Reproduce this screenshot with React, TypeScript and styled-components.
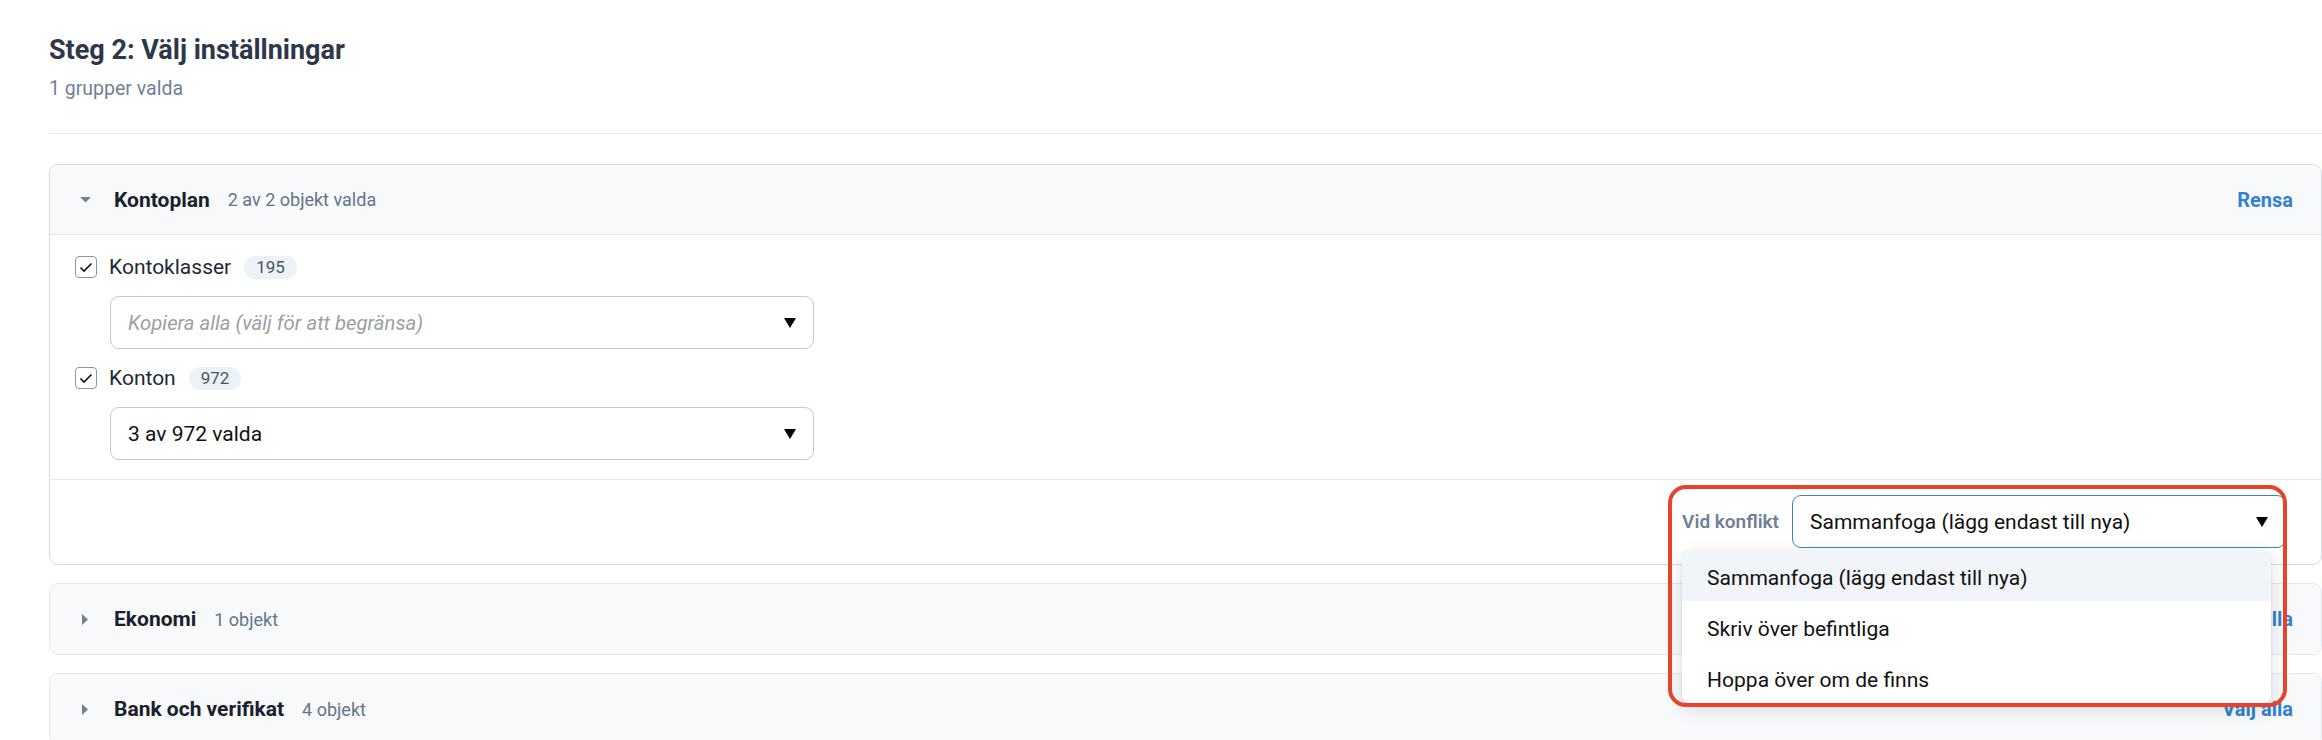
import React from "react";
import styled, { createGlobalStyle } from "styled-components";

const GlobalStyle = createGlobalStyle`
  html, body { margin: 0; padding: 0; background: #ffffff; }
  body {
    font-family: Roboto, "Liberation Sans", Arial, sans-serif;
    -webkit-font-smoothing: antialiased;
  }
  *, *::before, *::after { box-sizing: border-box; }
`;

const Page = styled.div`
  width: 2322px;
  height: 740px;
  overflow: hidden;
  padding: 34px 0 0 49px;
`;

const Title = styled.h2`
  margin: 0;
  font-size: 27px;
  line-height: 32px;
  font-weight: 700;
  color: #2d3748;
`;

const Subtitle = styled.p`
  margin: 11px 0 0;
  font-size: 19.5px;
  line-height: 24px;
  color: #718096;
`;

const Divider = styled.hr`
  margin: 32px 0 30px;
  height: 0;
  border: 0;
  border-top: 1px solid #e2e8f0;
`;

const CardList = styled.div`
  display: flex;
  flex-direction: column;
  gap: 18px;
`;

const Card = styled.section<{ $open?: boolean }>`
  border: 1px solid ${(p) => (p.$open ? "#d3dae4" : "#e2e8f0")};
  border-radius: 9px;
  background: #ffffff;
`;

const CardHeader = styled.div<{ $open?: boolean }>`
  display: flex;
  align-items: center;
  height: 70px;
  padding: 0 28px 0 25px;
  background: #f8f9fb;
  border-bottom: ${(p) => (p.$open ? "1px solid #e2e8f0" : "none")};
  border-radius: ${(p) => (p.$open ? "8px 8px 0 0" : "8px")};
`;

const CaretBox = styled.span`
  width: 20px;
  height: 20px;
  display: flex;
  align-items: center;
  justify-content: center;
  color: #718096;
`;

const GroupName = styled.span`
  margin-left: 19px;
  font-size: 21px;
  font-weight: 700;
  color: #1a202c;
`;

const GroupMeta = styled.span`
  margin-left: 18px;
  font-size: 18px;
  color: #64748b;
`;

const HeaderLink = styled.button`
  margin-left: auto;
  padding: 0;
  border: 0;
  background: none;
  font-family: inherit;
  font-size: 20px;
  font-weight: 700;
  color: #3182ce;
  cursor: pointer;
`;

const CardBody = styled.div`
  display: flex;
  flex-direction: column;
  gap: 14px;
  padding: 17px 25px 19px;
`;

const ItemRow = styled.label`
  display: flex;
  align-items: center;
  height: 30px;
  gap: 12px;
`;

const CheckBox = styled.span`
  width: 22px;
  height: 22px;
  border: 1px solid #8e959d;
  border-radius: 4px;
  background: #ffffff;
  display: flex;
  align-items: center;
  justify-content: center;
`;

const ItemLabel = styled.span`
  font-size: 21px;
  color: #1f2937;
`;

const CountBadge = styled.span`
  margin-left: 1px;
  height: 23px;
  padding: 0 12px;
  border-radius: 12px;
  background: #edf2f7;
  color: #4a5568;
  font-size: 17px;
  line-height: 23px;
`;

const SelectBox = styled.div<{ $focused?: boolean; $width: number }>`
  width: ${(p) => p.$width}px;
  height: 53px;
  padding: 0 17px;
  display: flex;
  align-items: center;
  justify-content: space-between;
  border: 1px solid ${(p) => (p.$focused ? "#3b82c4" : "#c5c9ce")};
  border-radius: 9px;
  background: #ffffff;
  font-size: 21px;
  color: #111111;
`;

const IndentedSelect = styled.div`
  margin-left: 35px;
`;

const Placeholder = styled.span`
  font-style: italic;
  font-size: 20.3px;
  color: #9aa0a6;
`;

const CardFooter = styled.div`
  display: flex;
  justify-content: flex-end;
  padding: 15px 35px 16px;
  border-top: 1px solid #e2e8f0;
`;

const ConflictGroup = styled.div`
  position: relative;
  display: flex;
  align-items: center;
  gap: 13px;
  z-index: 10;
`;

const ConflictLabel = styled.span`
  font-size: 19px;
  font-weight: 600;
  color: #718096;
`;

const Menu = styled.ul`
  position: absolute;
  top: calc(100% + 2px);
  left: 0;
  right: 15px;
  margin: 0;
  padding: 0;
  list-style: none;
  background: #ffffff;
  border-radius: 8px;
  overflow: hidden;
  box-shadow: 0 6px 18px rgba(15, 23, 42, 0.14), 0 1px 3px rgba(15, 23, 42, 0.08);
`;

const MenuItem = styled.li<{ $active?: boolean }>`
  height: 51px;
  padding: 5px 25px 0;
  display: flex;
  align-items: center;
  font-size: 21px;
  color: #111111;
  background: ${(p) => (p.$active ? "#f1f4f8" : "#ffffff")};
`;

const Highlight = styled.div`
  position: absolute;
  top: -10px;
  left: -14px;
  right: -1px;
  height: 222px;
  border: 4px solid #e8412c;
  border-radius: 18px;
  pointer-events: none;
  z-index: 30;
`;

const CaretDown = () => (
  <svg width="11" height="6" viewBox="0 0 11 6">
    <polygon points="0,0 11,0 5.5,5.5" fill="currentColor" />
  </svg>
);

const CaretRight = () => (
  <svg width="6" height="11" viewBox="0 0 6 11">
    <polygon points="0,0 6,5.5 0,11" fill="currentColor" />
  </svg>
);

const SelectArrow = () => (
  <svg width="12" height="10" viewBox="0 0 12 10">
    <polygon points="0,0 12,0 6,10" fill="#000000" />
  </svg>
);

const Check = () => (
  <svg width="14" height="11" viewBox="0 0 14 11">
    <polyline points="1.5,5.5 5,9 12.5,1.5" fill="none" stroke="#111111" strokeWidth="1.6" />
  </svg>
);

type Item = { label: string; count: number; value?: string; placeholder?: string };

const items: Item[] = [
  { label: "Kontoklasser", count: 195, placeholder: "Kopiera alla (välj för att begränsa)" },
  { label: "Konton", count: 972, value: "3 av 972 valda" },
];

const options = [
  "Sammanfoga (lägg endast till nya)",
  "Skriv över befintliga",
  "Hoppa över om de finns",
];

const collapsed = [
  { name: "Ekonomi", meta: "1 objekt" },
  { name: "Bank och verifikat", meta: "4 objekt" },
];

export default function App() {
  return (
    <>
      <GlobalStyle />
      <Page>
        <Title>Steg 2: Välj inställningar</Title>
        <Subtitle>1 grupper valda</Subtitle>
        <Divider />
        <CardList>
          <Card $open>
            <CardHeader $open>
              <CaretBox>
                <CaretDown />
              </CaretBox>
              <GroupName>Kontoplan</GroupName>
              <GroupMeta>2 av 2 objekt valda</GroupMeta>
              <HeaderLink>Rensa</HeaderLink>
            </CardHeader>
            <CardBody>
              {items.map((it) => (
                <React.Fragment key={it.label}>
                  <ItemRow>
                    <CheckBox>
                      <Check />
                    </CheckBox>
                    <ItemLabel>{it.label}</ItemLabel>
                    <CountBadge>{it.count}</CountBadge>
                  </ItemRow>
                  <IndentedSelect>
                    <SelectBox $width={704}>
                      {it.placeholder ? (
                        <Placeholder>{it.placeholder}</Placeholder>
                      ) : (
                        <span>{it.value}</span>
                      )}
                      <SelectArrow />
                    </SelectBox>
                  </IndentedSelect>
                </React.Fragment>
              ))}
            </CardBody>
            <CardFooter>
              <ConflictGroup>
                <ConflictLabel>Vid konflikt</ConflictLabel>
                <SelectBox $width={494} $focused>
                  <span>{options[0]}</span>
                  <SelectArrow />
                </SelectBox>
                <Menu>
                  {options.map((o, i) => (
                    <MenuItem key={o} $active={i === 0}>
                      {o}
                    </MenuItem>
                  ))}
                </Menu>
                <Highlight />
              </ConflictGroup>
            </CardFooter>
          </Card>
          {collapsed.map((c) => (
            <Card key={c.name}>
              <CardHeader>
                <CaretBox>
                  <CaretRight />
                </CaretBox>
                <GroupName>{c.name}</GroupName>
                <GroupMeta>{c.meta}</GroupMeta>
                <HeaderLink>Välj alla</HeaderLink>
              </CardHeader>
            </Card>
          ))}
        </CardList>
      </Page>
    </>
  );
}
